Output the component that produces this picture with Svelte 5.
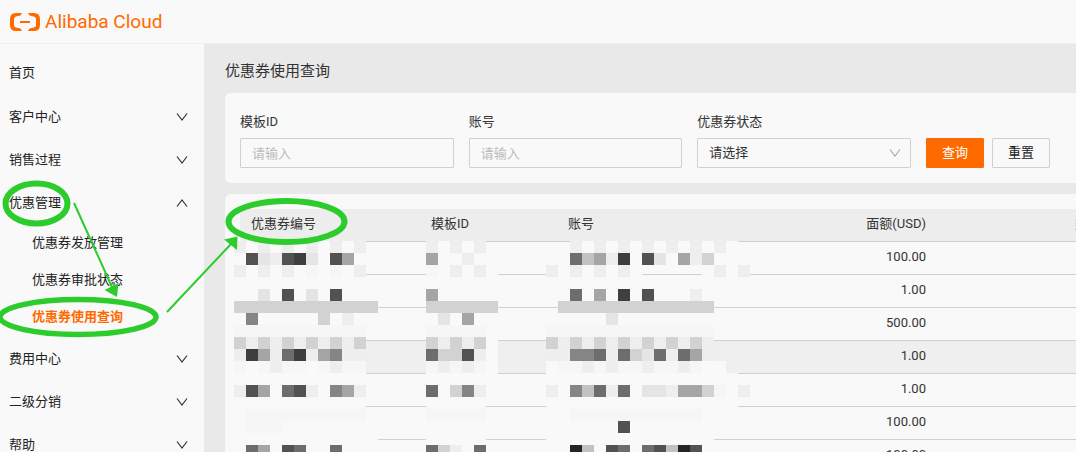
<script>
    let templateId = $state('');
    let account = $state('');
    let status = $state('');
    let openGroup = $state('优惠管理');

    const menu = [
        { name: '客户中心' },
        { name: '销售过程' },
        {
            name: '优惠管理',
            children: ['优惠券发放管理', '优惠券审批状态', '优惠券使用查询']
        },
        { name: '费用中心' },
        { name: '二级分销' },
        { name: '帮助' }
    ];
    const activePage = '优惠券使用查询';

    const amounts = ['100.00', '1.00', '500.00', '1.00', '1.00', '100.00', '100.00'];
    const hoveredRow = 3;

    // Mosaic over the private columns, one character per 12px cell
    const shades = {
        '.': '#f9f9f9', 1: '#f6f6f6', 2: '#eeeeee', 3: '#e5e5e5', 4: '#d2d2d2', 5: '#c2c2c2',
        6: '#a5a5a5', 7: '#858585', 8: '#6d6d6d', 9: '#525252', a: '#3e3e3e', b: '#242424'
    };
    const mosaics = [
        {
            x: 234,
            rows: [
                '2.2.2.2.2.2 ', '.9329a3.96. ', '2.2.2.1.1.2 ', '............', '..3.9.3.9...', '444444444444',
                '.7.....4.2. ', '11111111111 ', '42424242424 ', '2a628a26722 ', '1.1211.1211 ', '........... ',
                '296.892.762 ', '........... ', '.1111111111 ', '.111........', '............', '.86.98..8...'
            ]
        },
        {
            x: 426,
            rows: [
                '2.2.2 ', '6..2. ', '1.2.2.', '......', '6.....', '444444',
                '.3.6. ', '11111 ', '42424.', '84492.', '12121.', '......',
                '8.472 ', '..... ', '11111 ', '..... ', '..... ', '842.8 '
            ]
        },
        {
            x: 546,
            rows: [
                '  2.2.2.2.2.2.2. ', ' .8562a.93.624...', '2.2.2.2.     .2.2', '.................', '..8.6.a.9...2....', ' 4444444444444   ',
                '.....3........   ', '11111111111111   ', '42424242424242   ', '22778284382862   ', '.112121121121..  ', '................ ',
                '2.75828.3326641.2', '................ ', '..11111111111.   ', '......9.......   ', '..............   ', '..b5.98.895b9.   '
            ]
        }
    ];

    const cells = mosaics.flatMap((m) =>
        m.rows.flatMap((row, r) =>
            [...row].map((c, i) => ({ x: m.x + i * 12, y: 241 + r * 12, fill: shades[c] }))
        )
    ).filter((c) => c.fill);

    function toggle(name) {
        openGroup = openGroup === name ? '' : name;
    }

    function reset() {
        templateId = '';
        account = '';
        status = '';
    }
</script>

<div class="page">
    <header>
        <a class="logo" href="#home">
            <svg width="32" height="20" viewBox="0 0 32 20" aria-hidden="true">
                <path d="M13 1H7Q1 1 1 7V13Q1 19 7 19H13L11.500 16.500L7 15.500Q5 15 5 13V7Q5 5 7 4.500L11.500 3.500Z" fill="#ff6a00" />
                <path d="M19 1H25Q31 1 31 7V13Q31 19 25 19H19L20.500 16.500L25 15.500Q27 15 27 13V7Q27 5 25 4.500L20.500 3.500Z" fill="#ff6a00" />
                <path d="M11 10H21" stroke="#ff6a00" stroke-width="2" />
            </svg>
            <span>Alibaba Cloud</span>
        </a>
    </header>

    <div class="body">
        <nav>
            <a class="home" href="#index">首页</a>
            {#each menu as group}
                <button class="group" onclick={() => toggle(group.name)}>
                    <span>{group.name}</span>
                    <svg class:up={group.children && openGroup === group.name} width="12" height="8" viewBox="0 0 12 8" aria-hidden="true">
                        <path d="M1 0.500L6 7L11 0.500" />
                    </svg>
                </button>
                {#if group.children && openGroup === group.name}
                    <div class="children">
                        {#each group.children as child}
                            <a href="#{child}" class:active={child === activePage}>{child}</a>
                        {/each}
                    </div>
                {/if}
            {/each}
        </nav>

        <main>
            <h1>优惠券使用查询</h1>

            <form class="panel search" onsubmit={(e) => e.preventDefault()}>
                <div class="field">
                    <label for="template">模板ID</label>
                    <input id="template" type="text" placeholder="请输入" bind:value={templateId} />
                </div>
                <div class="field">
                    <label for="account">账号</label>
                    <input id="account" type="text" placeholder="请输入" bind:value={account} />
                </div>
                <div class="field">
                    <label for="status">优惠券状态</label>
                    <div class="select">
                        <select id="status" bind:value={status}>
                            <option value="">请选择</option>
                            <option value="used">已使用</option>
                            <option value="unused">未使用</option>
                        </select>
                        <svg width="12" height="8" viewBox="0 0 12 8" aria-hidden="true">
                            <path d="M1 0.500L6 7L11 0.500" />
                        </svg>
                    </div>
                </div>
                <div class="actions">
                    <button type="submit" class="primary">查询</button>
                    <button type="button" onclick={reset}>重置</button>
                </div>
            </form>

            <section class="panel list">
                <table>
                    <thead>
                        <tr>
                            <th class="coupon">优惠券编号</th>
                            <th class="template">模板ID</th>
                            <th class="account">账号</th>
                            <th class="amount">面额(USD)</th>
                            <th class="type">类型</th>
                        </tr>
                    </thead>
                    <tbody>
                        {#each amounts as amount, i}
                            <tr class:hovered={i === hoveredRow}>
                                <td></td>
                                <td></td>
                                <td></td>
                                <td class="amount">{amount}</td>
                                <td></td>
                            </tr>
                        {/each}
                    </tbody>
                </table>
            </section>
        </main>
    </div>

    <svg class="marks" width="1076" height="460" viewBox="0 0 1076 460" aria-hidden="true">
        <g shape-rendering="crispEdges">
            {#each cells as c}
                <rect x={c.x} y={c.y} width="12" height="12" fill={c.fill} />
            {/each}
        </g>
        <g fill="none" stroke="#2bcc2b">
            <ellipse cx="36.500" cy="203.500" rx="31" ry="20" stroke-width="6" />
            <ellipse cx="78" cy="317" rx="78" ry="17.500" stroke-width="5.500" />
            <ellipse cx="286.500" cy="221.500" rx="58" ry="20.500" stroke-width="6" />
            <path d="M74 203L112 287M167 312L231 244" stroke-width="2" />
        </g>
        <path d="M117 297L104.500 290L118.500 283ZM237.500 236.500L224 239.500L237 250Z" fill="#2bcc2b" />
    </svg>
</div>

<style>
    :global(body) { margin: 0; }

    .page {
        position: relative;
        display: flex;
        flex-direction: column;
        height: 100vh;
        overflow: hidden;
        background: #e9e9e9;
        color: #333;
        font: 13px/20px Roboto, "Noto Sans CJK SC", sans-serif;
    }

    header { flex: none; display: flex; align-items: center; height: 43px; padding: 0 9px; background: #f9f9f9; border-bottom: 1px solid #f0f0f0; }
    .logo { display: flex; align-items: center; gap: 4px; color: #ff6a00; text-decoration: none; font-size: 19px; }

    .body { flex: 1; display: flex; min-height: 0; }

    nav { flex: none; box-sizing: border-box; width: 204px; padding-top: 6px; background: #f9f9f9; }
    nav a, .group { display: flex; align-items: center; box-sizing: border-box; width: 100%; padding: 0 16px 0 9px; color: #222; text-decoration: none; }
    .home { height: 45px; }
    .group { justify-content: space-between; height: 43px; border: 0; background: none; font: inherit; cursor: pointer; }
    .group svg { fill: none; stroke: #333; stroke-width: 1.2; }
    .group svg.up { transform: rotate(180deg); }
    .children { padding-bottom: 2px; }
    .children a { height: 37px; padding-left: 32px; }
    .children a.active { color: #ff6a00; font-weight: bold; }

    main { flex: 1; min-width: 0; padding: 17px 0 0 21px; }
    h1 { margin: 0 0 12px; font-size: 15px; line-height: 20px; font-weight: normal; }

    .panel { background: #f9f9f9; border-radius: 6px 0 0 6px; }
    .search { display: grid; grid-template-columns: 1fr 1fr 1fr auto; align-items: end; gap: 15px; padding: 19px 26px 15px 15px; }
    .field { display: flex; flex-direction: column; gap: 6px; min-width: 0; }
    input, select, .actions button { box-sizing: border-box; height: 30px; border: 1px solid #d0d0d0; border-radius: 1px; background: #f9f9f9; color: #333; font: inherit; }
    input, select { width: 100%; padding: 0 11px; }
    input::placeholder { color: #bbb; }
    select { appearance: none; }
    .select { position: relative; display: flex; }
    .select svg { position: absolute; right: 10px; top: 11px; fill: none; stroke: #aaa; stroke-width: 1.2; pointer-events: none; }
    .actions { display: flex; gap: 8px; }
    .actions button { width: 58px; padding: 0; color: #222; cursor: pointer; }
    .actions .primary { border-color: #ff6a00; background: #ff6a00; color: #fff; }

    .list { margin-top: 11px; padding: 15px 0 15px 15px; overflow: hidden; }
    table { width: 100%; min-width: 872px; table-layout: fixed; border-collapse: separate; border-spacing: 0; }
    th, td { box-sizing: border-box; height: 33px; padding: 0 11px 3px; border-bottom: 1px solid #d0d0d0; text-align: left; font-weight: normal; }
    th { background: #ededed; }
    .hovered td { background: #efefef; }
    .coupon { width: 180px; }
    .template { width: 137px; }
    .account { width: 140px; }
    th.amount { width: 240px; }
    .amount, .type { text-align: right; }

    .marks { position: absolute; left: 0; top: 0; pointer-events: none; }
</style>
